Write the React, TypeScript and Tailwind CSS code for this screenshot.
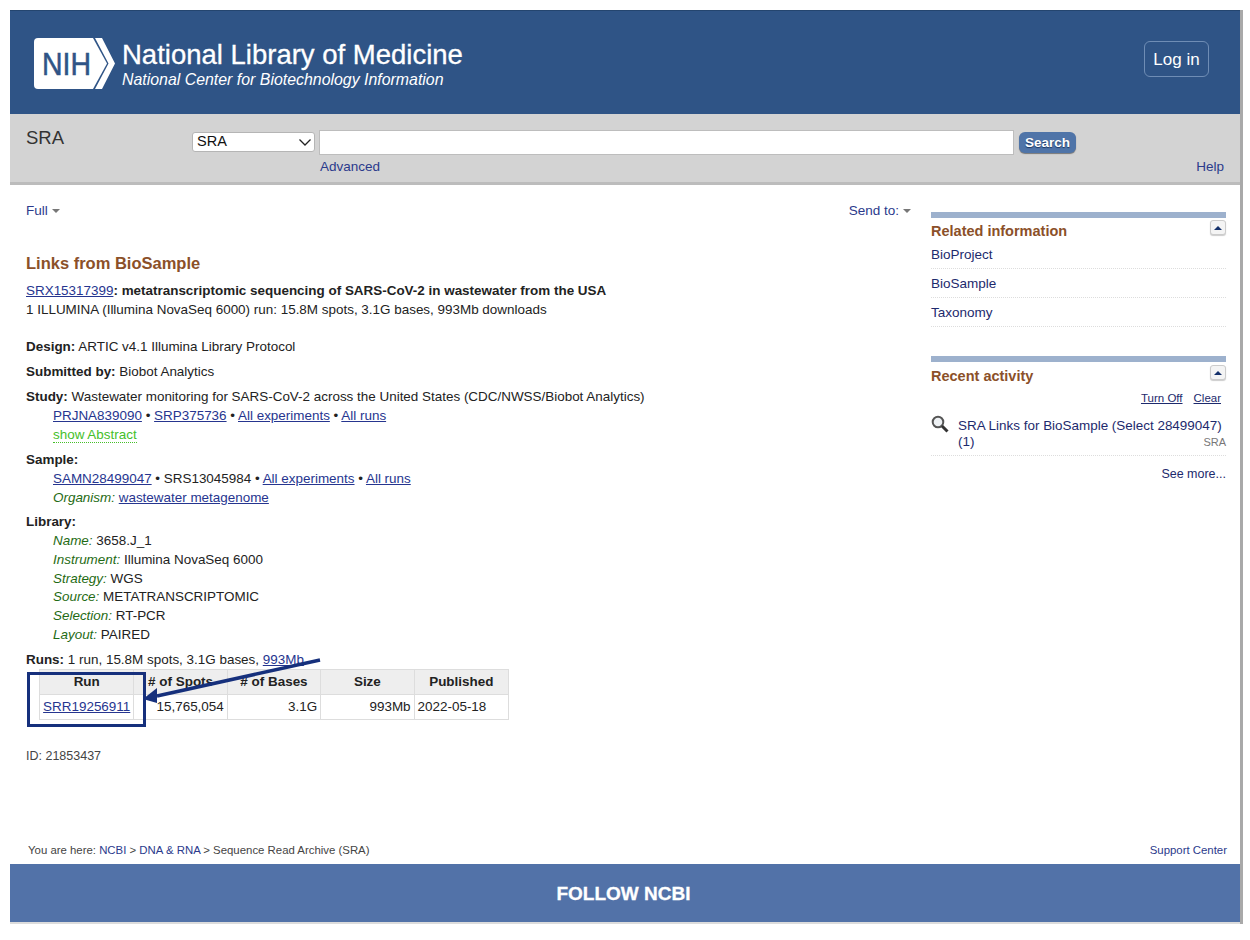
const FONT = "font-['Liberation_Sans',Arial,sans-serif]";
const link = "text-[#26358f] underline";
const nav = "text-[#2b3a8c]";
const organism = "italic text-[#1f6b14]";

const Caret = () => (
  <span className="inline-block ml-[4px] mb-[1px] align-middle w-0 h-0 border-x-[4.5px] border-x-transparent border-t-[4px] border-t-[#777]" />
);

const NihLogo = () => (
  <svg width="81" height="51" viewBox="0 0 81 51" className="shrink-0">
    <path d="M4 0H59L73 25.5L59 51H4Q0 51 0 47V4Q0 0 4 0Z" fill="#fff" />
    <path d="M61 0H68L81 25.5L68 51H61L74.5 25.5Z" fill="#fff" />
    <text x="8" y="37" fontSize="31" fontFamily="Liberation Sans" fill="#2f5486" stroke="#2f5486" strokeWidth="0.5" textLength="49" lengthAdjust="spacingAndGlyphs">NIH</text>
  </svg>
);

const Collapse = () => (
  <span className="w-[16px] h-[15px] rounded-[3px] border border-[#ccc] bg-[#f4f4f4] shadow-[0_1px_1px_#ccc] flex items-center justify-center">
    <span className="w-0 h-0 border-x-[4px] border-x-transparent border-b-[4px] border-b-[#14306b]" />
  </span>
);

const Th = ({ w, children }: { w: string; children: string }) => (
  <th className={`${w} h-[25px] border border-[#ddd] bg-[#eeeeee] text-center font-bold p-0`}>{children}</th>
);

const App = () => (
  <div className={`${FONT} w-[1250px] h-[940px] bg-white pl-[10px] pt-[10px] text-[13.45px] leading-[19px] text-[#222] overflow-hidden`}>
    <div className="relative w-[1233px] h-[914px] border-r-[3px] border-r-[#a9a9a9] flex flex-col">
      <header className="h-[104px] shrink-0 bg-[#2f5486] border-t border-t-[#24456f] flex items-center justify-between pl-[24px] pr-[31px]">
        <div className="flex items-center gap-[7px] pt-[2px]">
          <NihLogo />
          <div className="text-white">
            <div className="text-[27.5px] leading-[31px] [-webkit-text-stroke:0.3px_white]">National Library of Medicine</div>
            <div className="text-[15.9px] leading-[19px] italic">National Center for Biotechnology Information</div>
          </div>
        </div>
        <button className="w-[65px] h-[36px] mb-[7px] rounded-[6px] border border-[#6f8db5] text-white text-[17px]">Log in</button>
      </header>

      <div className="h-[71px] shrink-0 bg-[#d3d3d3] border-b-[3px] border-b-[#bcbcbc] flex pl-[16px] pr-[15px]">
        <div className="w-[165px] pt-[13px] text-[18.5px] leading-[22px] text-[#333]">SRA</div>
        <div className="flex-1 flex flex-col pt-[16px]">
          <div className="flex items-start">
            <div className="ml-[1px] mt-[2px] w-[123px] h-[20px] bg-white rounded-[3px] border border-[#b5b5b5] flex items-center justify-between pl-[4px] pr-[2px] pb-[1px] text-[14.5px] text-[#111]">
              SRA
              <svg width="14" height="14" viewBox="0 0 14 14" fill="none" stroke="#222" strokeWidth="1.3">
                <path d="M1.5 4.5L7 10L12.5 4.5" />
              </svg>
            </div>
            <div className="ml-[4px] w-[695px] h-[25px] bg-white border border-[#bdbdbd]" />
            <button className="ml-[5px] mt-[2px] w-[57px] h-[21px] rounded-[6px] bg-[#4f74a8] shadow-[0_1px_1px_#777] text-white font-bold text-[13.5px] [text-shadow:0_1px_1px_#1c3560]">Search</button>
          </div>
          <div className="flex justify-between mt-[2px] pl-[129px] pr-[1px]">
            <span className={`${nav} text-[13.5px]`}>Advanced</span>
            <span className={`${nav} text-[13.5px]`}>Help</span>
          </div>
        </div>
      </div>

      <main className="flex-1 flex pl-[16px] pr-[14px] min-h-0">
        <div className="w-[905px] shrink-0 pt-[16px] flex flex-col">
          <div className="flex justify-between pr-[20px]">
            <span className={`${nav} text-[13.5px]`}>Full<Caret /></span>
            <span className={`${nav} text-[13.5px]`}>Send to:<Caret /></span>
          </div>
          <h1 className="mt-[32px] text-[16.5px] leading-[22px] font-bold text-[#8b5029]">Links from BioSample</h1>
          <p className="mt-[7px]"><a className={link}>SRX15317399</a><b>: metatranscriptomic sequencing of SARS-CoV-2 in wastewater from the USA</b></p>
          <p>1 ILLUMINA (Illumina NovaSeq 6000) run: 15.8M spots, 3.1G bases, 993Mb downloads</p>
          <p className="mt-[18px]"><b>Design:</b> ARTIC v4.1 Illumina Library Protocol</p>
          <p className="mt-[6px]"><b>Submitted by:</b> Biobot Analytics</p>
          <p className="mt-[6px]"><b>Study:</b> Wastewater monitoring for SARS-CoV-2 across the United States (CDC/NWSS/Biobot Analytics)</p>
          <div className="pl-[27px]">
            <p><a className={link}>PRJNA839090</a> • <a className={link}>SRP375736</a> • <a className={link}>All experiments</a> • <a className={link}>All runs</a></p>
            <p><span className="text-[#45c02a] border-b border-dotted border-b-[#45c02a]">show Abstract</span></p>
          </div>
          <p className="mt-[6px]"><b>Sample:</b></p>
          <div className="pl-[27px]">
            <p><a className={link}>SAMN28499047</a> • SRS13045984 • <a className={link}>All experiments</a> • <a className={link}>All runs</a></p>
            <p><span className={organism}>Organism:</span> <a className={link}>wastewater metagenome</a></p>
          </div>
          <p className="mt-[5px]"><b>Library:</b></p>
          <div className="mt-[1px] pl-[27px] leading-[18.8px]">
            <p><span className={organism}>Name:</span> 3658.J_1</p>
            <p><span className={organism}>Instrument:</span> Illumina NovaSeq 6000</p>
            <p><span className={organism}>Strategy:</span> WGS</p>
            <p><span className={organism}>Source:</span> METATRANSCRIPTOMIC</p>
            <p><span className={organism}>Selection:</span> RT-PCR</p>
            <p><span className={organism}>Layout:</span> PAIRED</p>
          </div>
          <p className="mt-[5px]"><b>Runs:</b> 1 run, 15.8M spots, 3.1G bases, <a className={link}>993Mb</a></p>
          <table className="ml-[13px] border-collapse border border-[#ddd] w-[470px] table-fixed">
            <thead>
              <tr>
                <Th w="w-[94px]">Run</Th>
                <Th w="w-[93px]"># of Spots</Th>
                <Th w="w-[93px]"># of Bases</Th>
                <Th w="w-[93px]">Size</Th>
                <Th w="w-[94px]">Published</Th>
              </tr>
            </thead>
            <tbody>
              <tr className="h-[25px] [&>td]:border [&>td]:border-[#ddd] [&>td]:px-[3px] [&>td]:py-0">
                <td className="text-center"><a className={link}>SRR19256911</a></td>
                <td className="text-right">15,765,054</td>
                <td className="text-right">3.1G</td>
                <td className="text-right">993Mb</td>
                <td>2022-05-18</td>
              </tr>
            </tbody>
          </table>
          <p className="mt-[27px] text-[12.5px] text-[#444]">ID: 21853437</p>
          <div className="mt-auto mb-[4px] ml-[2px] flex justify-between text-[11.4px] text-[#444] w-[1199px]">
            <span>You are here: <span className={nav}>NCBI</span> &gt; <span className={nav}>DNA &amp; RNA</span> &gt; Sequence Read Archive (SRA)</span>
            <span className={nav}>Support Center</span>
          </div>
        </div>

        <aside className="w-[295px] shrink-0 pt-[27px] text-[#1d2a6d]">
          <div className="h-[6px] bg-[#9db1cd]" />
          <div className="flex justify-between items-start mt-[2px]">
            <h2 className="text-[14.5px] leading-[22px] font-bold text-[#8b5029]">Related information</h2>
            <Collapse />
          </div>
          <div className="-mt-[2px]">
            {["BioProject", "BioSample", "Taxonomy"].map((t) => (
              <div key={t} className="h-[29px] pt-[5px] border-b border-dotted border-b-[#ddd] text-[13.5px]">{t}</div>
            ))}
          </div>
          <div className="mt-[29px] h-[6px] bg-[#9db1cd]" />
          <div className="flex justify-between items-start mt-[3px]">
            <h2 className="text-[14.5px] leading-[22px] font-bold text-[#8b5029]">Recent activity</h2>
            <Collapse />
          </div>
          <div className="flex justify-end gap-[11px] pr-[5px] mt-[3px] text-[11.5px] leading-[16px] underline">
            <span>Turn Off</span><span>Clear</span>
          </div>
          <div className="relative flex mt-[12px] pb-[5px] border-b border-dotted border-b-[#ddd]">
            <svg width="18" height="18" viewBox="0 0 18 18" fill="none" className="shrink-0 -mt-[3px]">
              <circle cx="7" cy="7" r="5.3" stroke="#555" strokeWidth="2" fill="#eef1f4" />
              <path d="M11 11L16.5 16.5" stroke="#333" strokeWidth="3" />
            </svg>
            <div className="ml-[9px] text-[13.45px] leading-[16px]">SRA Links for BioSample (Select 28499047)<br />(1)</div>
            <span className="absolute right-0 bottom-[6px] text-[11px] leading-[14px] text-[#777]">SRA</span>
          </div>
          <div className="text-right mt-[10px] text-[12.5px] leading-[16px]">See more...</div>
        </aside>
      </main>

      <footer className="h-[60px] shrink-0 bg-[#5272a8] border-b-[2px] border-b-[#dcdcdc] flex items-center justify-center pr-[3px] text-white font-bold text-[19px] [-webkit-text-stroke:0.3px_white]">FOLLOW NCBI</footer>

      {/* annotation drawn on top of the screenshot */}
      <div className="absolute left-[17px] top-[662px] w-[119px] h-[55px] border-[3px] border-[#16307c]" />
      <svg className="absolute left-[130px] top-[645px]" width="190" height="60" viewBox="0 0 190 60">
        <path d="M180 5L17 41" stroke="#16307c" strokeWidth="3.5" />
        <path d="M3 44L17 33L17 48Z" fill="#16307c" />
      </svg>
    </div>
  </div>
);

export default App;
